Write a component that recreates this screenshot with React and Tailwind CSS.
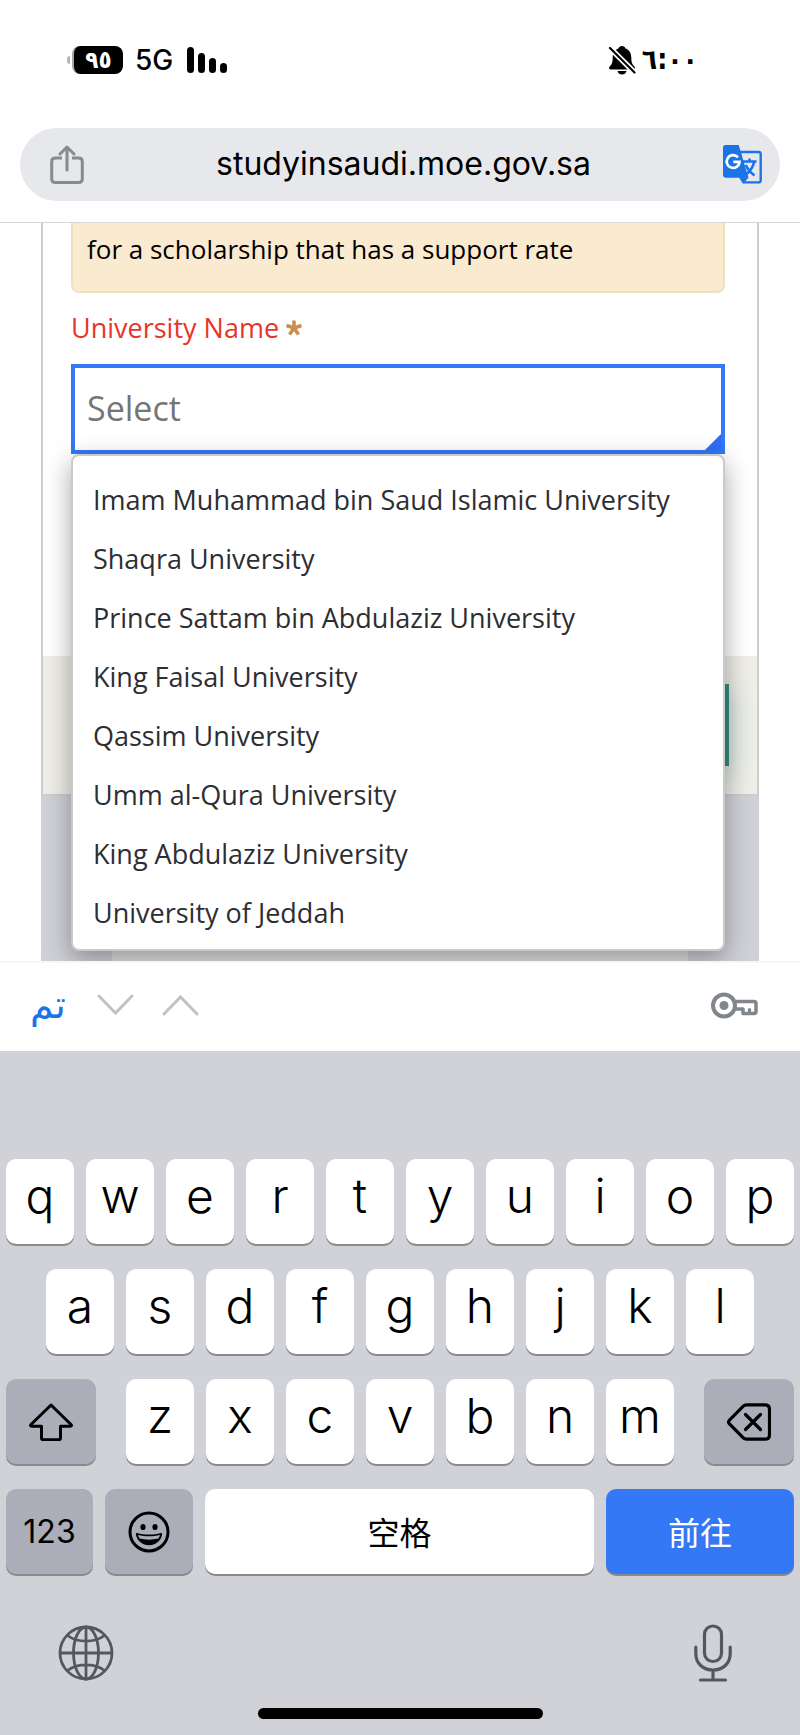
const universities = [
  "Imam Muhammad bin Saud Islamic University",
  "Shaqra University",
  "Prince Sattam bin Abdulaziz University",
  "King Faisal University",
  "Qassim University",
  "Umm al-Qura University",
  "King Abdulaziz University",
  "University of Jeddah",
];

const BellOffIcon = () => (
  <svg width="28" height="30" viewBox="0 0 28 30" aria-hidden="true">
    <path
      d="M14 1c1.800 0 3.100.9 3.600 2.400 3.700 1.400 5.700 4.600 5.700 9 0 5.500 1.200 7 3.100 9.100 1.200 1.300.5 3-1.300 3H3c-1.900 0-2.600-1.700-1.300-3 1.900-2.100 3-3.600 3-9.100 0-4.400 2-7.600 5.700-9C10.900 1.900 12.200 1 14 1z"
      fill="#000"
    />
    <path d="M9.500 26h9c-.5 2.300-2.300 3.600-4.500 3.600S10 28.300 9.500 26z" fill="#000" />
    <path d="M2 3l24.500 24.500" stroke="#fff" strokeWidth="5.500" />
    <path d="M2 3l24.500 24.500" stroke="#000" strokeWidth="2.200" strokeLinecap="round" />
  </svg>
);

const ShareIcon = () => (
  <svg width="34" height="40" viewBox="0 0 34 40" fill="none" aria-hidden="true">
    <path
      d="M12 13H5.500C3 13 1.700 14.200 1.700 16.500V34c0 2.400 1.200 3.600 3.800 3.600h23c2.500 0 3.800-1.200 3.800-3.600V16.500c0-2.300-1.300-3.500-3.800-3.500H22"
      stroke="#868b90"
      strokeWidth="3"
    />
    <path
      d="M17 25V2.500M10 9l7-7 7 7"
      stroke="#868b90"
      strokeWidth="3"
      strokeLinecap="round"
      strokeLinejoin="round"
    />
  </svg>
);

const TranslateIcon = () => (
  <svg width="39" height="39" viewBox="0 0 39 39" fill="none" aria-hidden="true">
    <path
      d="M17 7h18.500c1.300 0 2.200.9 2.200 2.200v26c0 1.300-.9 2.200-2.200 2.200H20.500L17 32z"
      stroke="#1a73e8"
      strokeWidth="2.400"
    />
    <path d="M2.500 0h13.200L25.500 32.800H2.800C1.200 32.800 0 31.600 0 30V2.500C0 1 1 0 2.500 0z" fill="#1a73e8" />
    <path d="M18 32l2.300 6.600 5.400-6.200z" fill="#1a73e8" />
    <path
      d="M15 12.400a6.400 6.400 0 1 0 1.500 4.500H10.300"
      stroke="#fff"
      strokeWidth="2.700"
    />
    <path
      d="M20 16.500h13.500M26.500 13.500v3M31.200 16.500c-.8 4.600-3.600 9.200-8 13M22.800 20c1.700 4 4.600 7.500 8.700 10.500"
      stroke="#1a73e8"
      strokeWidth="2.600"
    />
  </svg>
);

const KeyIcon = () => (
  <svg width="47" height="27" viewBox="0 0 47 27" fill="none" aria-hidden="true">
    <circle cx="13" cy="13.500" r="11" stroke="#80868b" strokeWidth="4" />
    <circle cx="13" cy="13.500" r="4.500" fill="#80868b" />
    <path
      d="M23 9.500h20c1.200 0 2 .8 2 2v8c0 1.200-.8 2-2 2H32v-4.500h-9"
      stroke="#80868b"
      strokeWidth="3.500"
      strokeLinejoin="round"
    />
    <path d="M38.500 17.500v4" stroke="#80868b" strokeWidth="3.200" strokeLinecap="round" />
  </svg>
);

const ShiftIcon = () => (
  <svg width="44" height="38" viewBox="0 0 44 38" fill="none" aria-hidden="true">
    <path
      d="M22 2L2 21.500c-.9 1-.5 1.800.7 1.800H12.500V35c0 1 .7 1.700 1.700 1.700h15.600c1 0 1.700-.7 1.700-1.700V23.300h9.800c1.200 0 1.600-.8.7-1.800z"
      stroke="#000"
      strokeWidth="3"
      strokeLinejoin="round"
    />
  </svg>
);

const BackspaceIcon = () => (
  <svg width="44" height="38" viewBox="0 0 44 38" fill="none" aria-hidden="true">
    <path
      d="M19.500 1.800H38c3 0 4.500 1.500 4.500 4.500v25.400c0 3-1.500 4.500-4.500 4.500H19.500c-1.300 0-2.300-.4-3.200-1.300L2.500 21c-1.200-1.300-1.200-2.700 0-4L16.300 3.100c.9-.9 1.900-1.300 3.200-1.300z"
      stroke="#000"
      strokeWidth="3.200"
    />
    <path d="M18.500 11.500l15 15M33.500 11.500l-15 15" stroke="#000" strokeWidth="3.200" strokeLinecap="round" />
  </svg>
);

const EmojiIcon = () => (
  <svg width="42" height="42" viewBox="0 0 42 42" fill="none" aria-hidden="true">
    <circle cx="21" cy="21" r="19" stroke="#000" strokeWidth="3" />
    <ellipse cx="15" cy="16" rx="2.600" ry="3.100" fill="#000" />
    <ellipse cx="27" cy="16" rx="2.600" ry="3.100" fill="#000" />
    <path d="M9 22c7.500 2 16.500 2 24 0 1 0 1.300.5 1.100 1.500C33 30 27.500 34.300 21 34.300S9 30 7.900 23.500C7.700 22.500 8 22 9 22z" fill="#000" />
    <path d="M10 24c7 1.800 15 1.800 22 0-.4 1.400-.9 2.500-1.600 3.500-6 1.500-12.800 1.500-18.800 0C10.900 26.500 10.400 25.400 10 24z" fill="#abaeb9" />
  </svg>
);

const GlobeIcon = () => (
  <svg width="56" height="56" viewBox="0 0 56 56" fill="none" stroke="#54585d" strokeWidth="2.800" aria-hidden="true">
    <circle cx="28" cy="28" r="26" />
    <ellipse cx="28" cy="28" rx="12.500" ry="26" />
    <path d="M28 2v52M2 28h52M9.500 10.500c10 7.500 27 7.500 37 0M9.500 45.500c10-7.500 27-7.500 37 0" />
  </svg>
);

const MicIcon = () => (
  <svg width="38" height="58" viewBox="0 0 38 58" fill="none" stroke="#54585d" strokeWidth="3.200" strokeLinecap="round" aria-hidden="true">
    <rect x="10.500" y="2" width="17" height="35.500" rx="8.500" />
    <path d="M1.800 23v6.500C1.800 39.500 9 46 19 46s17.200-6.500 17.200-16.500V23M19 46v10M6.500 56h25" />
  </svg>
);

const keyShadow = "shadow-[0_2px_0_#898a8d] rounded-[10px]";

const LetterKey = ({ letter }) => (
  <button
    type="button"
    className={`flex h-[85px] items-center justify-center bg-white pb-[11px] text-[48px] font-light text-black ${keyShadow}`}
  >
    {letter}
  </button>
);

const Letters = ({ letters }) =>
  letters.split("").map((letter) => <LetterKey key={letter} letter={letter} />);

const StatusBar = () => (
  <div className="flex h-[119px] items-center justify-between pl-[67px] pr-[102px] text-black">
    <div className="flex items-center">
      <span className="mr-0.5 h-2 w-[3px] rounded-l-full bg-[#b5b5b5]" />
      <span className="flex h-7 w-[51px] items-center justify-center rounded-lg border-l-2 border-[#a6a6a6] bg-black font-['DejaVu_Sans_Condensed','DejaVu_Sans',sans-serif] text-2xl font-bold text-white">
        ٩٥
      </span>
      <span className="ml-3 text-[28px] font-medium">5G</span>
      <span className="ml-3.5 flex items-end gap-1">
        <span className="h-[26px] w-[7px] rounded-sm bg-black" />
        <span className="h-5 w-[7px] rounded-sm bg-black" />
        <span className="h-[15px] w-[7px] rounded-sm bg-black" />
        <span className="h-2.5 w-[7px] rounded-sm bg-black" />
      </span>
    </div>
    <div className="flex items-center gap-1.5">
      <BellOffIcon />
      <bdo
        dir="ltr"
        className="font-['DejaVu_Sans_Condensed','DejaVu_Sans',sans-serif] text-[28px] font-bold"
      >
        ٦:٠٠
      </bdo>
    </div>
  </div>
);

const AddressBar = () => (
  <div className="mx-5 mb-[21px] mt-[9px] flex h-[73px] items-center justify-between rounded-full bg-[#e7e8ec] pl-[30px] pr-[18px]">
    <button type="button" aria-label="Share">
      <ShareIcon />
    </button>
    <span className="pb-0.5 text-[32px] text-black">studyinsaudi.moe.gov.sa</span>
    <button type="button" aria-label="Translate">
      <TranslateIcon />
    </button>
  </div>
);

const UniversityForm = () => (
  <main className="h-[738px] overflow-hidden px-[41px] font-['Open_Sans',sans-serif]">
    <div className="flex h-full flex-col bg-[#d0d1d7]">
      <div className="border-x-2 border-b-2 border-[#cdcdcd] bg-white">
        <div className="h-[433px] pl-7 pr-8">
          <div className="flex h-[70px] items-start rounded-b-lg border-x-2 border-b-2 border-[#f0dfc3] bg-[#faebd0] px-3.5 pt-2 text-[26px] leading-9 text-black">
            for a scholarship that has a support rate
          </div>
          <div className="flex h-[71px] items-center gap-1.5 pb-0.5">
            <label htmlFor="university" className="text-[27px] leading-9 text-[#e8352a]">
              University Name
            </label>
            <svg width="18" height="17" viewBox="0 0 18 17" aria-hidden="true">
              <path
                d="M9 9V1.500M9 9L1.500 6.500M9 9l7.500-2.500M9 9l-4.500 6.500M9 9l4.500 6.500"
                stroke="#c98f4e"
                strokeWidth="3.500"
              />
            </svg>
          </div>
          <div className="relative">
            <input
              id="university"
              type="text"
              role="combobox"
              aria-expanded="true"
              aria-controls="university-list"
              placeholder="Select"
              className="block h-[90px] w-full border-4 border-[#3478f6] bg-white px-3 pb-0.5 text-[34px] text-black outline-none placeholder:text-[#757575]"
            />
            <span className="absolute bottom-1 right-1 size-4 bg-[#2f6df6] [clip-path:polygon(100%_0,100%_100%,0_100%)]" />
            <ul
              id="university-list"
              role="listbox"
              aria-label="University Name"
              className="absolute left-0 right-0 top-full z-10 rounded-lg border-2 border-[#cacaca] bg-white pb-[7px] pt-3.5 shadow-[0_8px_26px_rgba(0,0,0,0.35)]"
            >
              {universities.map((name) => (
                <li
                  key={name}
                  role="option"
                  aria-selected="false"
                  className="h-[59px] whitespace-nowrap px-5 text-[27px] leading-[59px] text-[#2d2e33]"
                >
                  {name}
                </li>
              ))}
            </ul>
          </div>
        </div>
        <div className="flex h-[138px] items-center justify-end bg-[#efeee9] px-7">
          <button
            type="button"
            aria-label="Next"
            className="h-[82px] w-40 bg-[#368c7e] shadow-[0_8px_24px_rgba(54,140,126,0.3)]"
          />
        </div>
      </div>
      <div className="mx-[71px] mt-10 flex-1 bg-[#e2e2e2]" />
    </div>
  </main>
);

const InputToolbar = () => (
  <div className="flex h-[90px] items-center justify-between border-t-2 border-[#f6f6f8] bg-white pb-1 pl-8 pr-[42px]">
    <div className="flex items-center">
      <button
        type="button"
        lang="ar"
        className="flex w-8 justify-center whitespace-nowrap font-['DejaVu_Sans',sans-serif] text-[38px] leading-none text-[#1a73e8]"
      >
        تم
      </button>
      <button type="button" aria-label="Next field" className="ml-[33px]">
        <svg width="37" height="22" viewBox="0 0 37 22" fill="none">
          <path d="M2 2l16.500 17L35 2" stroke="#c2c2c2" strokeWidth="3" strokeLinecap="round" />
        </svg>
      </button>
      <button type="button" aria-label="Previous field" className="ml-7">
        <svg width="37" height="22" viewBox="0 0 37 22" fill="none">
          <path d="M2 20L18.500 3 35 20" stroke="#c2c2c2" strokeWidth="3" strokeLinecap="round" />
        </svg>
      </button>
    </div>
    <button type="button" aria-label="Passwords">
      <KeyIcon />
    </button>
  </div>
);

const Keyboard = () => {
  const darkKey = `flex h-[85px] items-center justify-center bg-[#abaeb9] text-black ${keyShadow}`;

  return (
    <div className="flex flex-1 flex-col bg-[#d1d2d8] px-1.5 pt-[108px]">
      <div className="flex flex-col gap-[25px]">
        <div className="grid grid-cols-10 gap-3">
          <Letters letters="qwertyuiop" />
        </div>
        <div className="grid grid-cols-9 gap-3 px-10">
          <Letters letters="asdfghjkl" />
        </div>
        <div className="grid grid-cols-[90fr_548fr_90fr] gap-[30px]">
          <button type="button" aria-label="Shift" className={darkKey}>
            <ShiftIcon />
          </button>
          <div className="grid grid-cols-7 gap-3">
            <Letters letters="zxcvbnm" />
          </div>
          <button type="button" aria-label="Delete" className={darkKey}>
            <BackspaceIcon />
          </button>
        </div>
        <div className="grid grid-cols-[87fr_88fr_389fr_188fr] gap-3">
          <button type="button" className={`${darkKey} text-[32px]`}>
            123
          </button>
          <button type="button" aria-label="Emoji" className={darkKey}>
            <EmojiIcon />
          </button>
          <button
            type="button"
            lang="zh"
            className={`h-[85px] bg-white pt-1 text-[32px] text-black ${keyShadow}`}
          >
            空格
          </button>
          <button
            type="button"
            lang="zh"
            className={`h-[85px] bg-[#3478f6] pt-1 text-[32px] text-white ${keyShadow}`}
          >
            前往
          </button>
        </div>
      </div>
      <div className="mt-[50px] flex items-center justify-between pl-[52px] pr-[62px]">
        <button type="button" aria-label="Switch keyboard">
          <GlobeIcon />
        </button>
        <button type="button" aria-label="Dictate">
          <MicIcon />
        </button>
      </div>
      <div className="mx-auto mb-4 mt-auto h-[11px] w-[285px] rounded-full bg-black" />
    </div>
  );
};

const App = () => (
  <div className="flex min-h-screen flex-col bg-white font-['Inter','Noto_Sans_CJK_SC',sans-serif]">
    <header className="border-b border-[#d6d6d6]">
      <StatusBar />
      <AddressBar />
    </header>
    <UniversityForm />
    <InputToolbar />
    <Keyboard />
  </div>
);

export default App;
